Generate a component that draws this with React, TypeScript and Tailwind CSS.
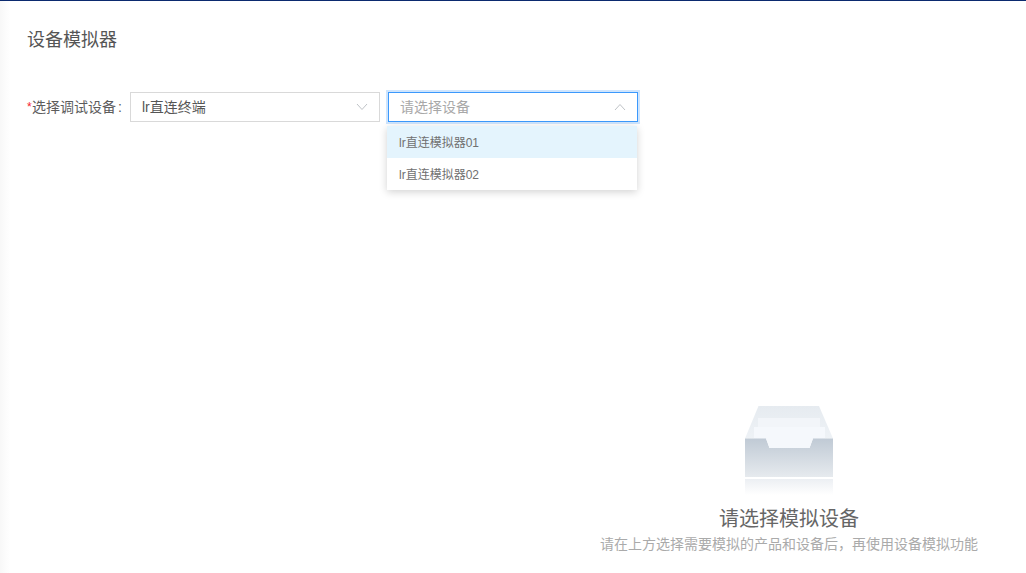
import React from "react";

function Chevron({ up }: { up?: boolean }) {
  return (
    <svg width="12" height="8" viewBox="0 0 12 8" fill="none" className="shrink-0">
      <path d={up ? "M1 7L6 1.5L11 7" : "M1 1L6 6.5L11 1"} stroke="#bfc3c7" strokeWidth="1" />
    </svg>
  );
}

function Inbox() {
  return (
    <svg width="120" height="105" viewBox="-1 0 120 105" className="block">
      <defs>
        <linearGradient id="front" x1="0" y1="0" x2="0" y2="1">
          <stop offset="0" stopColor="#c0cad5" />
          <stop offset="1" stopColor="#e6eaee" />
        </linearGradient>
        <linearGradient id="back" x1="0" y1="0" x2="0" y2="1">
          <stop offset="0" stopColor="#e6ebf0" />
          <stop offset="1" stopColor="#eef2f6" />
        </linearGradient>
        <linearGradient id="refl" x1="0" y1="0" x2="0" y2="1">
          <stop offset="0" stopColor="#eceff3" />
          <stop offset="1" stopColor="#ffffff" />
        </linearGradient>
      </defs>
      <path d="M28.5 11H89L103 43.5H15Z" fill="url(#back)" />
      <rect x="28" y="23" width="62" height="21" fill="#f2f5f9" />
      <rect x="24" y="32" width="71" height="12" fill="#f5f8fc" />
      <path d="M15 43.5H36L39.5 53H79.5L83 43.5H103V82H15Z" fill="url(#front)" />
      <path d="M36 43.5H83L79.5 53H39.5Z" fill="#f5f8fc" />
      <rect x="15" y="84" width="88" height="16" fill="url(#refl)" />
    </svg>
  );
}

export default function App() {
  return (
    <div className="relative h-[573px] w-[1026px] overflow-hidden border-t border-[#0b2a6f] bg-white bg-gradient-to-r from-[#f8f8f8] from-0% to-white to-[1%]">
      <div className="flex h-full flex-col font-['Liberation_Sans','Noto_Sans_CJK_SC',sans-serif]">
        <h1 className="mt-[26px] ml-[27px] h-[26px] text-[18px] leading-[26px] font-normal text-[#555]">设备模拟器</h1>

        <div className="mt-[39px] ml-[27px] flex h-[30px] items-center">
          <label className="flex w-[103px] items-center text-[14px] leading-[30px] whitespace-nowrap text-[#5c5c5c]">
            <span className="w-[5px] text-[12px] text-[#f5222d]">*</span>
            <span>选择调试设备</span>
            <span className="ml-[2px]">:</span>
          </label>
          <div className="flex h-[30px] w-[250px] items-center justify-between border border-[#d9d9d9] bg-white pr-[11px] pl-[11px] text-[14px] text-[#555]">
            <span>lr直连终端</span>
            <Chevron />
          </div>
          <div className="relative ml-[8px] h-[30px] w-[250px]">
            <div className="flex h-[30px] w-[250px] items-center justify-between border border-[#3b99fc] bg-white pr-[11px] pl-[11px] text-[14px] text-[#a8a8a8] shadow-[0_0_0_2px_#cfe5fd]">
              <span>请选择设备</span>
              <Chevron up />
            </div>
            <ul className="absolute top-[34px] left-[-1px] z-10 w-[250px] bg-white text-[12px] leading-[34px] text-[#707070] shadow-[0_2px_8px_rgba(0,0,0,0.18)]">
              <li className="h-[32px] bg-[#e4f4fd] pl-[12px]">lr直连模拟器01</li>
              <li className="h-[32px] pl-[12px]">lr直连模拟器02</li>
            </ul>
          </div>
        </div>

        <div className="mt-[273px] ml-[552px] flex w-[474px] flex-col items-center">
          <Inbox />
          <div className="mt-[5px] w-full text-center text-[20px] leading-[28px] text-[#666]">请选择模拟设备</div>
          <div className="mt-[1px] w-full text-center text-[14px] leading-[20px] text-[#aaa]">
            请在上方选择需要模拟的产品和设备后，再使用设备模拟功能
          </div>
        </div>
      </div>
    </div>
  );
}
